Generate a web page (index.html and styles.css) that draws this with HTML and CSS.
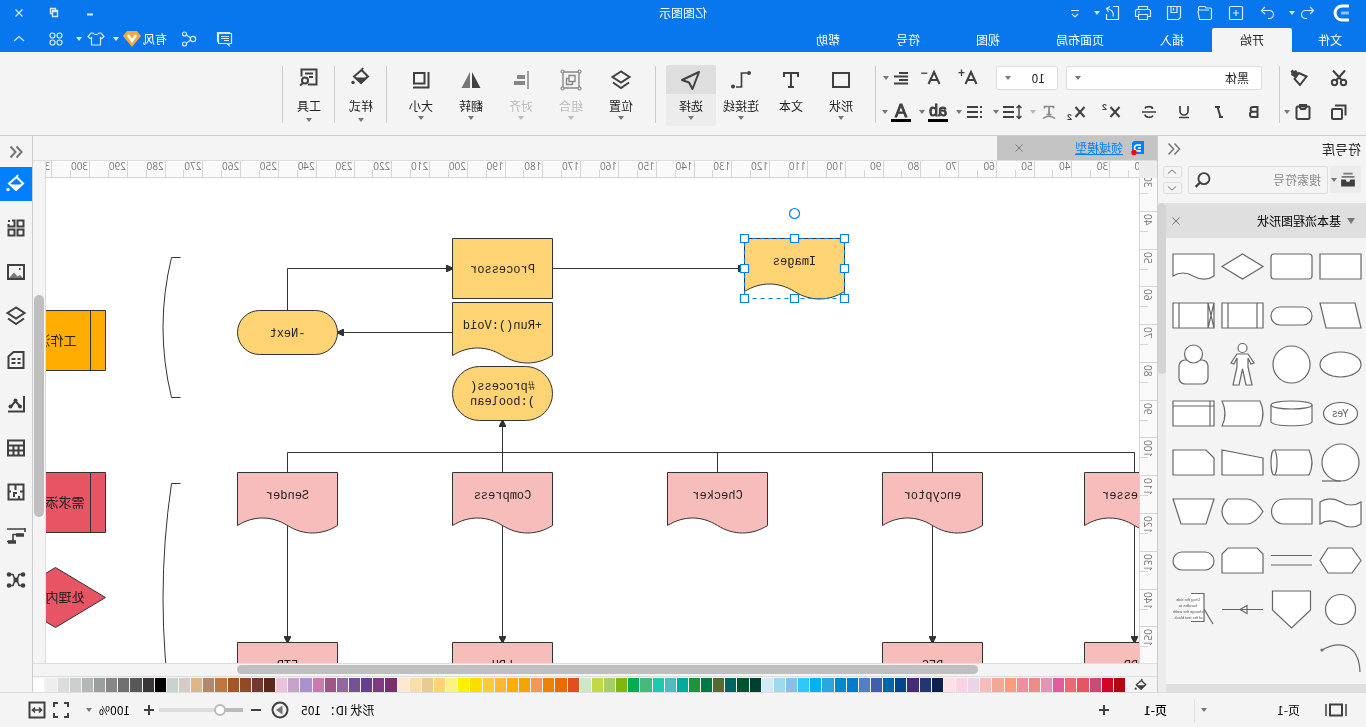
FILE: index.html
```html
<!DOCTYPE html>
<html lang="zh-CN">
<head>
<meta charset="utf-8">
<title>亿图图示</title>
<link rel="stylesheet" href="styles.css">
</head>
<body>
<svg class="defs" aria-hidden="true">
  <symbol id="undo" viewBox="0 0 24 24"><path d="M10 6 6.500 9.500 10 13M7 9.500h7.500a4 4 0 0 1 0 8H13"/></symbol>
  <symbol id="redo" viewBox="0 0 24 24"><path d="M14 6l3.500 3.500L14 13M17 9.500H9.500a4 4 0 0 0 0 8H11"/></symbol>
  <symbol id="new" viewBox="0 0 24 24"><rect x="5.500" y="5.500" width="13" height="13" rx="1"/><path d="M12 9v6M9 12h6"/></symbol>
  <symbol id="open" viewBox="0 0 24 24"><path d="M18.500 9V6.500l-1-1H12L11 7H6.500l-1 1v9.500l1 1h11l1.500-8-1-1.500H8"/></symbol>
  <symbol id="save" viewBox="0 0 24 24"><path d="M5.500 5.500h13v13h-11l-2-2zM9 5.500v6h6v-6M12.500 7v2.500"/></symbol>
  <symbol id="print" viewBox="0 0 24 24"><path d="M7.500 9V5.500h9V9M7.500 15.500h-3v-6l1-1h13l1 1v6h-3M7.500 13.500h9v5h-9zM15 11h2"/></symbol>
  <symbol id="export" viewBox="0 0 24 24"><path d="M11 5.500H5.500v13h12V13M11 15.500c-1-4 1-7 6-8M14 5.500l3.500 2-2 3.500"/></symbol>
  <symbol id="drop" viewBox="0 0 24 24"><path d="M8 9.500h8M9 13l3 3 3-3"/></symbol>
  <symbol id="comment" viewBox="0 0 24 24"><path d="M5.500 6.500h13v10H10l-2 2v-2H5.500zM8 9.500h8M8 11.500h8M8 13.500h5M7 5.500h12.500V15"/></symbol>
  <symbol id="share" viewBox="0 0 24 24"><circle cx="8" cy="12" r="2.700"/><circle cx="16.500" cy="7" r="2"/><circle cx="16.500" cy="17" r="2"/><path d="M10.500 11 14.500 8M10.500 13l4 3"/></symbol>
  <symbol id="shirt" viewBox="0 0 24 24"><path d="M9 6c1 2 5 2 6 0h2l3 3.500-2 2-1.500-1V18h-9v-7.500L6 11.500l-2-2L7 6z"/></symbol>
  <symbol id="apps" viewBox="0 0 24 24"><circle cx="8.500" cy="8.500" r="2.500"/><circle cx="15.500" cy="8.500" r="2.500"/><circle cx="8.500" cy="15.500" r="2.500"/><circle cx="15.500" cy="15.500" r="2.500"/></symbol>
  <symbol id="up" viewBox="0 0 24 24"><path d="M7 14l5-4.500 5 4.500"/></symbol>
  <symbol id="down" viewBox="0 0 24 24"><path d="M7 10l5 4.500 5-4.500"/></symbol>
  <symbol id="min" viewBox="0 0 24 24"><path d="M9 13.500h6" stroke-width="2"/></symbol>
  <symbol id="restore" viewBox="0 0 24 24"><path d="M8.500 10.500h5v5h-5zM8.500 10.500v-1h5v1M10.500 9V7.500h5v5h-2" stroke-width="1.400"/></symbol>
  <symbol id="x" viewBox="0 0 24 24"><path d="M8.500 8.500l7 7M15.500 8.500l-7 7"/></symbol>
  <symbol id="fold" viewBox="0 0 24 24"><path d="M11.500 6.500 6.500 12l5 5.500M17.500 6.500l-5 5.500 5 5.500"/></symbol>

  <symbol id="cut" viewBox="0 0 24 24"><circle cx="7.500" cy="16.500" r="2.700"/><circle cx="16.500" cy="16.500" r="2.700"/><path d="M6 4.500l9 10M18 4.500l-9 10"/></symbol>
  <symbol id="brush" viewBox="0 0 24 24"><path d="M4.500 10.500 12 7l4.500 6-5.500 6z"/><path d="M12 8l3-4 2 1 1.500-1.500 2 2-1 1.500.5 2-4 2.500z" fill="currentColor" stroke="none"/></symbol>
  <symbol id="copy" viewBox="0 0 24 24"><rect x="9" y="9" width="10" height="10" rx="1"/><path d="M5.500 15.500v-10H16"/></symbol>
  <symbol id="paste" viewBox="0 0 24 24"><rect x="5.500" y="6.500" width="13" height="12.500" rx="1.500"/><path d="M9 6.500V5h6v2.500l-1 1.500h-4l-1-1.500z"/></symbol>
  <symbol id="bold" viewBox="0 0 24 24"><path d="M8.500 7h4.500a2.400 2.400 0 0 1 0 4.800H8.500zM8.500 11.800h5a2.600 2.600 0 0 1 0 5.200h-5z"/></symbol>
  <symbol id="italic" viewBox="0 0 24 24"><path d="M11 7h5M8 17h4M13.500 7l-3 10"/></symbol>
  <symbol id="under" viewBox="0 0 24 24"><path d="M8 6v5a4 4 0 0 0 8 0V6M7 17.500h10" stroke-width="1.700"/></symbol>
  <symbol id="strike" viewBox="0 0 24 24"><path d="M16 8.500C15 6 8.500 6 8.500 9M8 15.500c1 2.500 8 2.500 8-1M5 12h14" stroke-width="1.700"/></symbol>
  <symbol id="cross" viewBox="0 0 24 24"><path d="M6.500 7l9 10M15.500 7l-9 10" stroke-width="2"/></symbol>
  <symbol id="clear" viewBox="0 0 24 24"><path d="M7.500 8.500V6.500h9v2M12 6.500v8M9.500 14.500h5M6 18.500c3-3 9-3 12 0" stroke-width="1.700"/></symbol>
  <symbol id="spacing" viewBox="0 0 24 24"><path d="M10 7h11M10 12h11M10 17h11" stroke-width="2"/><path d="M5 6v12M2.500 8 5 5.500 7.500 8M2.500 16 5 18.500 7.500 16" stroke-width="1.400"/></symbol>
  <symbol id="bullets" viewBox="0 0 24 24"><path d="M9 7h11M9 12h11M9 17h11M5 7h2M5 12h2M5 17h2" stroke-width="2"/></symbol>
  <symbol id="align" viewBox="0 0 24 24"><path d="M5 7h9M5 10.500h14M5 14h9M5 17.500h14" stroke-width="2"/></symbol>
  <symbol id="letter" viewBox="0 0 24 24"><path d="M5.500 18 11 6l5.500 12M7.500 14h7" stroke-width="2"/></symbol>

  <symbol id="r-shape" viewBox="0 0 24 24"><rect x="4" y="5" width="16" height="14" stroke-width="2"/></symbol>
  <symbol id="r-text" viewBox="0 0 24 24"><path d="M5 9V5h14v4M12 5v14M9 19h6" stroke-width="2"/></symbol>
  <symbol id="r-line" viewBox="0 0 24 24"><path d="M6 5h5.500v14H17" stroke-width="1.700"/><circle cx="4" cy="5" r="2" fill="currentColor" stroke="none"/><circle cx="20" cy="18.500" r="2" fill="currentColor" stroke="none"/></symbol>
  <symbol id="r-select" viewBox="0 0 24 24"><path d="M4 4l17 8-7 2.500-3.500 6.500z" stroke-width="2" stroke-linejoin="round"/></symbol>
  <symbol id="layers" viewBox="0 0 24 24"><path d="M12 3.500 20.500 9 12 14.500 3.500 9z"/><path d="M4 14.500 12 20l8-5.500"/></symbol>
  <symbol id="r-group" viewBox="0 0 24 24"><path d="M4 4h16v16H4zM8 7.500h6v6H8zM14 10.500h2.500v6h-6v-3" stroke-width="1.400"/><g fill="#f4f4f4" stroke-width="1.200"><circle cx="3.500" cy="3.500" r="1.500"/><circle cx="20.500" cy="3.500" r="1.500"/><circle cx="3.500" cy="20.500" r="1.500"/><circle cx="20.500" cy="20.500" r="1.500"/></g></symbol>
  <symbol id="r-align" viewBox="0 0 24 24"><path d="M5 3v18" stroke-width="1.500"/><path d="M8 9h8M8 15h11" stroke-width="4"/></symbol>
  <symbol id="r-flip" viewBox="0 0 24 24"><path d="M11 4v16H2.500z" fill="currentColor" stroke="none"/><path d="M13 4v16h8.500z" fill="#777" stroke="none"/></symbol>
  <symbol id="r-size" viewBox="0 0 24 24"><rect x="8.500" y="5" width="10.500" height="10.500" stroke-width="2"/><path d="M4.500 4v15.500H20" stroke-width="2"/></symbol>
  <symbol id="bucket" viewBox="0 0 24 24"><path d="M11.500 5 5 11.500l7 6.500 7-6.500L12 5.500 10 3"/><path d="M5 12.500h14L12 19z" fill="currentColor" stroke="none"/><circle cx="20" cy="17.500" r="1.700" fill="currentColor" stroke="none"/></symbol>
  <symbol id="r-tools" viewBox="0 0 24 24"><path d="M13 19.500H4.500v-15h15v7M8 8.500h8M8 12h4"/><circle cx="16" cy="15.500" r="3"/><path d="M18 18l3 2.500"/></symbol>

  <symbol id="s-grid" viewBox="0 0 24 24"><path d="M4.500 4.500h6v6h-6zM4.500 13.500h6v6h-6zM13.500 13.500h6v6h-6zM16 4.500h-2.500v6h6V8"/><path d="M18 5h2" stroke-width="2"/></symbol>
  <symbol id="s-image" viewBox="0 0 24 24"><rect x="4" y="5" width="16" height="14"/><path d="M5 18l3-3 2.500 1.500 3.500-4 5 5.500z" fill="#777" stroke="none"/><path d="M7.500 9h1.500"/></symbol>
  <symbol id="s-doc" viewBox="0 0 24 24"><path d="M4.500 4h10l5 4.500V20h-15zM7.500 11h3M12.500 11h4M7.500 15h3M12.500 15h4"/></symbol>
  <symbol id="s-chart" viewBox="0 0 24 24"><path d="M4 4v15.500h16M8 14.500 12.500 9l4.500 5.500"/><g fill="currentColor" stroke="none"><circle cx="8" cy="14.500" r="2"/><circle cx="12.500" cy="8.500" r="2"/><circle cx="17.500" cy="14.500" r="2"/></g></symbol>
  <symbol id="s-table" viewBox="0 0 24 24"><rect x="4" y="4.500" width="16" height="15"/><path d="M4 9.500h16M4 14.500h16M9.500 9.500v10M14.500 9.500v10"/></symbol>
  <symbol id="s-plan" viewBox="0 0 24 24"><path d="M4.500 4.500h15v15h-15zM12.500 4.500V10M4.500 11.500h3.500M11 13h3v4M17 11.500h2.500M9 19.500V16" stroke-width="2"/></symbol>
  <symbol id="s-gantt" viewBox="0 0 24 24"><path d="M3 5h18M3 4v4M6 10.500h9M15 17.500V10M12 17.500h9" stroke-width="1.600"/><path d="M4 11h8M12 18h8" stroke-width="3.500"/></symbol>
  <symbol id="s-mind" viewBox="0 0 24 24"><path d="M5 6.500h4l2 5.500h2l2-5.500h4M5 17.500h4L11 12h2l2 5.500h4" stroke-width="1.600"/><g fill="currentColor" stroke="none"><circle cx="5" cy="6.500" r="2.300"/><circle cx="19" cy="6.500" r="2.300"/><circle cx="5" cy="17.500" r="2.300"/><circle cx="19" cy="17.500" r="2.300"/><circle cx="12" cy="12" r="2.500"/></g></symbol>

  <symbol id="library" viewBox="0 0 24 24"><path d="M7 5h10M5 8.500h14" stroke="#777"/><path d="M4.500 11.500h5l1 2.500h3l1-2.500h5V19h-15z" fill="currentColor" stroke="none"/></symbol>
  <symbol id="search" viewBox="0 0 24 24"><circle cx="11" cy="10.500" r="6"/><path d="M15.500 15l4.500 4.500" stroke-width="2.600"/></symbol>
  <symbol id="screen" viewBox="0 0 24 24"><rect x="6" y="6.500" width="12" height="11"/><path d="M2 6v12M22 6v12" stroke-width="1.500"/></symbol>
  <symbol id="plus" viewBox="0 0 24 24"><path d="M12 7v10M7 12h10"/></symbol>
  <symbol id="minus" viewBox="0 0 24 24"><path d="M7 12h10"/></symbol>
  <symbol id="play" viewBox="0 0 24 24"><circle cx="12" cy="12" r="7.500"/><path d="M9.500 7.500l6.500 4.500-6.500 4.500z" fill="#777" stroke="none"/></symbol>
  <symbol id="full" viewBox="0 0 24 24"><path d="M5 9V5h4M15 5h4v4M19 15v4h-4M9 19H5v-4"/></symbol>
  <symbol id="fit" viewBox="0 0 24 24"><rect x="4.500" y="4.500" width="15" height="15"/><path d="M7 12h10M10 9.500 7.500 12l2.500 2.500M14 9.500l2.500 2.500-2.500 2.500" stroke-width="1.600"/></symbol>
</svg>

<div class="app">
  <header class="top">
    <div class="titlebar">
      <div class="quick">
        <svg class="logo" viewBox="0 0 18 18"><path d="M1 2h7a7 7 0 0 1 0 14H1" stroke="#fff" stroke-width="3" fill="none"/><path d="M1 9h8" stroke="#8cc4ff" stroke-width="3"/></svg>
        <button class="ico ico--first" aria-label="撤销"><svg><use href="#undo"/></svg></button><i class="caret"></i>
        <button class="ico tb" aria-label="重做"><svg><use href="#redo"/></svg></button>
        <button class="ico tb" aria-label="新建"><svg><use href="#new"/></svg></button>
        <button class="ico tb" aria-label="打开"><svg><use href="#open"/></svg></button>
        <button class="ico tb" aria-label="保存"><svg><use href="#save"/></svg></button>
        <button class="ico tb" aria-label="打印"><svg><use href="#print"/></svg></button>
        <button class="ico" aria-label="导出"><svg><use href="#export"/></svg></button><i class="caret"></i>
        <button class="ico more" aria-label="更多"><svg><use href="#drop"/></svg></button>
      </div>
      <h1 class="title">亿图图示</h1>
      <div class="window">
        <button class="ico" aria-label="最小化"><svg><use href="#min"/></svg></button>
        <button class="ico" aria-label="还原"><svg><use href="#restore"/></svg></button>
        <button class="ico" aria-label="关闭"><svg><use href="#x"/></svg></button>
      </div>
    </div>
    <div class="menubar">
      <nav class="menu">
        <button>文件</button><button class="on">开始</button><button>插入</button><button>页面布局</button><button>视图</button><button>符号</button><button>帮助</button>
      </nav>
      <div class="account">
        <button class="ico" aria-label="评论"><svg><use href="#comment"/></svg></button>
        <button class="ico" aria-label="分享"><svg><use href="#share"/></svg></button>
        <button class="user">有风<svg class="vip" viewBox="0 0 18 16"><path d="M4 0h10l4 5-9 11L0 5z" fill="#f3ab3c"/><path d="M5 4l4 6 4-6" fill="none" stroke="#fff" stroke-width="2.400"/></svg><i class="caret"></i></button>
        <button class="ico skin" aria-label="皮肤"><svg><use href="#shirt"/></svg></button><i class="caret"></i>
        <button class="ico appsbtn" aria-label="应用"><svg><use href="#apps"/></svg></button>
        <button class="ico" aria-label="收起"><svg><use href="#up"/></svg></button>
      </div>
    </div>
  </header>

  <section class="ribbon">
    <div class="clip">
      <div class="row"><button class="ico" aria-label="剪切"><svg><use href="#cut"/></svg></button><button class="ico brush" aria-label="格式刷"><svg><use href="#brush"/></svg></button></div>
      <div class="row"><button class="ico" aria-label="复制"><svg><use href="#copy"/></svg></button><button class="ico paste" aria-label="粘贴"><svg><use href="#paste"/></svg></button><i class="caret"></i></div>
    </div>
    <div class="font">
      <div class="row">
        <label class="field field--font"><select aria-label="字体"><option>黑体</option></select><i class="caret"></i></label>
        <label class="field field--size"><select aria-label="字号"><option>10</option></select><i class="caret"></i></label>
        <button class="ico grow" aria-label="增大字号"><svg><use href="#letter"/></svg><sup>+</sup></button>
        <button class="ico shrink" aria-label="减小字号"><svg><use href="#letter"/></svg><sup>−</sup></button>
        <button class="ico" aria-label="对齐"><svg><use href="#align"/></svg></button><i class="caret"></i>
      </div>
      <div class="row row--format">
        <button class="ico tf" aria-label="粗体"><svg><use href="#bold"/></svg></button>
        <button class="ico tf" aria-label="斜体"><svg><use href="#italic"/></svg></button>
        <button class="ico tf" aria-label="下划线"><svg><use href="#under"/></svg></button>
        <button class="ico tf" aria-label="删除线"><svg><use href="#strike"/></svg></button>
        <button class="ico tf" aria-label="上标"><svg><use href="#cross"/></svg><sup>2</sup></button>
        <button class="ico tf" aria-label="下标"><svg><use href="#cross"/></svg><sub>2</sub></button>
        <span class="split split--off"><button class="ico" aria-label="清除格式"><svg><use href="#clear"/></svg></button><i class="caret"></i></span>
        <span class="split"><button class="ico" aria-label="行距"><svg><use href="#spacing"/></svg></button><i class="caret"></i></span>
        <span class="split"><button class="ico" aria-label="项目符号"><svg><use href="#bullets"/></svg></button><i class="caret"></i></span>
        <span class="split"><button class="mark" aria-label="突出显示">ab</button><i class="caret"></i></span>
        <span class="split"><button class="mark mark--a" aria-label="字体颜色">A</button><i class="caret"></i></span>
      </div>
    </div>
    <div class="big">
      <button><svg><use href="#r-shape"/></svg><span>形状</span><i class="caret"></i></button>
      <button><svg><use href="#r-text"/></svg><span>文本</span><i class="caret none"></i></button>
      <button><svg><use href="#r-line"/></svg><span>连接线</span><i class="caret"></i></button>
      <button class="on"><svg><use href="#r-select"/></svg><span>选择</span><i class="caret"></i></button>
    </div>
    <div class="big">
      <button><svg><use href="#layers"/></svg><span>位置</span><i class="caret"></i></button>
      <button class="off"><svg><use href="#r-group"/></svg><span>组合</span><i class="caret"></i></button>
      <button class="off"><svg><use href="#r-align"/></svg><span>对齐</span><i class="caret"></i></button>
      <button><svg><use href="#r-flip"/></svg><span>翻转</span><i class="caret"></i></button>
      <button><svg><use href="#r-size"/></svg><span>大小</span><i class="caret"></i></button>
    </div>
    <div class="big big--one"><button><svg><use href="#bucket"/></svg><span>样式</span><i class="caret"></i></button></div>
    <div class="big big--one"><button><svg><use href="#r-tools"/></svg><span>工具</span><i class="caret"></i></button></div>
  </section>

  <main class="work">
    <aside class="library">
      <div class="lib-head"><h2>符号库</h2><button class="ico" aria-label="折叠"><svg><use href="#fold"/></svg></button></div>
      <div class="lib-tools">
        <button class="lib-btn" aria-label="符号库菜单"><svg><use href="#library"/></svg><i class="caret"></i></button>
        <label class="search"><input type="text" placeholder="搜索符号" aria-label="搜索符号"><svg><use href="#search"/></svg></label>
        <div class="step"><button aria-label="上一个"><svg><use href="#up"/></svg></button><button aria-label="下一个"><svg><use href="#down"/></svg></button></div>
      </div>
      <div class="lib-body">
        <div class="lib-list">
          <div class="cat"><i class="tri"></i><h3>基本流程图形状</h3><button class="ico" aria-label="关闭"><svg><use href="#x"/></svg></button></div>
          <div class="shapes">
            <svg><path d="M4 12h41v25H4z"/></svg>
            <svg><rect x="4" y="12" width="41" height="25" rx="3"/></svg>
            <svg><path d="M4 24.500 24.500 12 45 24.500 24.500 37z"/></svg>
            <svg><path d="M4 12h41v22c-6-4-14-4-20 0-7 4-15 4-21 0z"/></svg>
            <svg><path d="M10 12h35l-6 25H4z"/></svg>
            <svg><rect x="4" y="16" width="41" height="18" rx="9"/></svg>
            <svg><path d="M4 12h41v25H4zM10 12v25M39 12v25"/></svg>
            <svg><path d="M4 12h41v25H4zM10 12v25M39 12v25M4 12l6 25M10 12 4 37"/></svg>
            <svg><ellipse cx="24.500" cy="24.500" rx="20.500" ry="12.500"/></svg>
            <svg><circle cx="24.500" cy="24.500" r="18.500"/></svg>
            <svg><circle cx="24.500" cy="8" r="4.500"/><path d="M19 14h11l6 9-3 1-3-6v9l4 18h-6l-3.500-16L21 45h-6l4-18v-9l-3 6-3-1z"/></svg>
            <svg><rect x="10" y="20" width="29" height="24" rx="6"/><circle cx="24.500" cy="14" r="9"/></svg>
            <svg><ellipse cx="24.500" cy="24.500" rx="17" ry="11"/><text x="24.500" y="28" class="yes">Yes</text></svg>
            <svg><path d="M4 16v17c4 5 37 5 41 0V16"/><ellipse cx="24.500" cy="16" rx="20.500" ry="4"/></svg>
            <svg><path d="M7 12h38q-6 12.500 0 25H7q-6-12.500 0-25z"/></svg>
            <svg><path d="M4 12h41v25H4zM8 12v25M4 17h41"/></svg>
            <svg><circle cx="24.500" cy="24.500" r="18.500"/><path d="M24.500 43H43"/></svg>
            <svg><path d="M42 12H7q-6 12.500 0 25h35"/><ellipse cx="42" cy="24.500" rx="3" ry="12.500"/></svg>
            <svg><path d="M4 20 45 12v25H4z"/></svg>
            <svg><path d="M12 12h33v25H4V20z"/></svg>
            <svg><path d="M4 15c6 4 14 4 20 0 7-4 15-4 21 0v22c-6-4-14-4-21 0-6 4-14 4-20 0z"/></svg>
            <svg><path d="M4 12h28a12.500 12.500 0 0 1 0 25H4z"/></svg>
            <svg><path d="M4 24.500Q12 12 20 12h19q12 12.500 0 25H20Q12 37 4 24.500z"/></svg>
            <svg><path d="M4 12h41l-8 25H12z"/></svg>
            <svg><path d="M4 24.500 13 12h24l8 12.500L37 37H13z"/></svg>
            <svg><path d="M4 19.500h41M4 29h41"/></svg>
            <svg><path d="M10 12h29l6 6v19H4V18z"/></svg>
            <svg><rect x="4" y="16" width="41" height="18" rx="9"/></svg>
            <svg><circle cx="24.500" cy="24.500" r="15"/></svg>
            <svg><path d="M5.500 6h38v19l-19 18-19-18z"/></svg>
            <svg><path d="M4 24.500h41M20 20.500v8l7-4z"/></svg>
            <svg><path d="M27 8.500H14v28h13M14 24 5 39"/><g class="note"><text x="30" y="16">Drag the side</text><text x="30" y="22">handles to</text><text x="30" y="28">change the width</text><text x="30" y="34">of the text block.</text></g></svg>
            <svg><path class="open" d="M5 38C6 10 25 6 43 16"/><circle cx="43" cy="16" r="1"/></svg>
          </div>
        </div>
        <div class="vbar"><i></i></div>
      </div>
    </aside>

    <section class="center">
      <div class="tabs">
        <div class="tab">
          <svg class="tab-ico" viewBox="0 0 14 16"><path d="M1 1h10l2 2v11H1z" fill="#0080ff"/><path d="M4 5h3.500a2.500 2.500 0 0 1 0 6H4M4 8h3" fill="none" stroke="#fff" stroke-width="1.500"/><circle cx="11" cy="12.500" r="2.700" fill="red"/></svg>
          <a href="#doc">领域模型</a>
          <button class="ico" aria-label="关闭标签"><svg><use href="#x"/></svg></button>
        </div>
      </div>
      <div class="stage">
        <div class="corner"></div>
        <div class="ruler ruler--h"></div>
        <div class="gap"></div>
        <div class="ruler ruler--v"></div>
        <svg class="canvas" id="doc">
          <defs>
            <marker id="arrow" viewBox="0 0 8 8" refX="7" refY="4" markerWidth="7" markerHeight="7" markerUnits="userSpaceOnUse" orient="auto"><path d="M0 0 8 4 0 8z" fill="#333"/></marker>
            <path id="docshape" d="M0 0h100v53c-16 10-34 10-50 0-16-10-34-10-50 0z" transform="matrix(-1 0 0 1 100 0)"/>
          </defs>
          <g transform="translate(-226.500 -177.500)">
            <g class="wire">
              <path d="M813 268H621" marker-end="url(#arrow)"/>
              <path d="M1078 310V268H913" marker-end="url(#arrow)"/>
              <path d="M913 332h115" marker-end="url(#arrow)"/>
              <path d="M863 472V420" marker-end="url(#arrow)"/>
              <path d="M231 472V452h847v20M433 452v20M648 452v20"/>
              <path d="M1078 524v118" marker-end="url(#arrow)"/>
              <path d="M863 524v118" marker-end="url(#arrow)"/>
              <path d="M433 524v118" marker-end="url(#arrow)"/>
              <path d="M231 524v118" marker-end="url(#arrow)"/>
              <path d="M1185 257h9q17 70 0 140h-9M1185 483h9q17 115 0 230h-9"/>
            </g>
            <g class="gold">
              <use href="#docshape" x="521" y="238"/>
              <path d="M813 238h100v60H813z"/>
              <use href="#docshape" x="813" y="302"/>
              <rect x="1028" y="310" width="100" height="44" rx="22"/>
              <rect x="813" y="366" width="100" height="54" rx="27"/>
            </g>
            <g class="pink">
              <use href="#docshape" x="181" y="472"/><use href="#docshape" x="383" y="472"/><use href="#docshape" x="598" y="472"/><use href="#docshape" x="813" y="472"/><use href="#docshape" x="1028" y="472"/>
              <path d="M181 642h100v60H181zM383 642h100v60H383zM813 642h100v60H813zM1028 642h100v60h-100z"/>
            </g>
            <path class="amber" d="M1260 310h100v60h-100zM1275 310v60"/>
            <path class="red" d="M1260 472h100v60h-100zM1275 472v60M1260 597l50-30 50 30-50 30z"/>
            <g class="label">
              <text x="571" y="264">Images</text><text x="863" y="272">Processor</text><text x="863" y="328">+Run():Void</text><text x="1078" y="336">-Next</text><text x="863" y="389">#process(</text><text x="863" y="404">):boolean</text>
              <text x="231" y="498">processer</text><text x="433" y="498">encyptor</text><text x="648" y="498">Checker</text><text x="863" y="498">Compress</text><text x="1078" y="498">Sender</text>
              <text x="231" y="668">UDP</text><text x="433" y="668">DES</text><text x="863" y="668">LPH</text><text x="1078" y="668">FTP</text>
            </g>
            <g class="cjk"><text x="1289" y="344">工作流</text><text x="1281" y="506">需求添加</text><text x="1281" y="601">处理内容</text></g>
            <g class="handles">
              <path d="M521 238h100v60H521z" class="dash"/>
              <circle cx="571" cy="213" r="5"/>
              <path d="M517 234h8v8h-8zM567 234h8v8h-8zM617 234h8v8h-8zM517 264h8v8h-8zM617 264h8v8h-8zM517 294h8v8h-8zM567 294h8v8h-8zM617 294h8v8h-8z"/>
            </g>
          </g>
        </svg>
        <div class="scroll-v"><i></i></div>
        <div class="scroll-h"><i></i></div>
      </div>
      <div class="palette"><svg class="fill"><use href="#bucket"/></svg><div class="swatches"></div></div>
    </section>

    <aside class="rail">
      <button class="rail-fold" aria-label="折叠"><svg><use href="#fold"/></svg></button>
      <button class="on" aria-label="填充"><svg><use href="#bucket"/></svg></button>
      <button aria-label="符号"><svg><use href="#s-grid"/></svg></button>
      <button aria-label="图片"><svg><use href="#s-image"/></svg></button>
      <button aria-label="图层"><svg><use href="#layers"/></svg></button>
      <button aria-label="备注"><svg><use href="#s-doc"/></svg></button>
      <button aria-label="图表"><svg><use href="#s-chart"/></svg></button>
      <button aria-label="表格"><svg><use href="#s-table"/></svg></button>
      <button aria-label="平面图"><svg><use href="#s-plan"/></svg></button>
      <button aria-label="甘特图"><svg><use href="#s-gantt"/></svg></button>
      <button aria-label="思维导图"><svg><use href="#s-mind"/></svg></button>
    </aside>
  </main>

  <footer class="status">
    <div class="pages">
      <button class="ico view" aria-label="视图"><svg><use href="#screen"/></svg></button>
      <label class="page-pick"><select aria-label="页面"><option>页-1</option></select><i class="caret"></i></label>
      <button class="page-tab">页-1</button>
      <button class="ico" aria-label="添加页面"><svg><use href="#plus"/></svg></button>
    </div>
    <div class="zoom">
      <span class="shape-id">形状 ID：&nbsp;105</span>
      <button class="ico" aria-label="播放"><svg><use href="#play"/></svg></button>
      <button class="ico" aria-label="缩小"><svg><use href="#minus"/></svg></button>
      <input type="range" min="0" max="100" value="23" aria-label="缩放">
      <button class="ico" aria-label="放大"><svg><use href="#plus"/></svg></button>
      <span class="percent">100%</span><i class="caret"></i>
      <button class="ico full" aria-label="全屏"><svg><use href="#full"/></svg></button>
      <button class="ico fit" aria-label="适合宽度"><svg><use href="#fit"/></svg></button>
    </div>
  </footer>
</div>
<script src="app.js"></script>
</body>
</html>
```

FILE: styles.css
```css
* { box-sizing: border-box; }
html, body { height: 100%; margin: 0; overflow: hidden; }
body { font: 12px/16px "Noto Sans CJK SC", sans-serif; color: #222; background: #f4f4f4; }
h1, h2, h3 { margin: 0; font-size: 12px; font-weight: 400; }
button, input, select { font: inherit; color: inherit; margin: 0; padding: 0; border: 0; background: none; outline: 0; appearance: none; }
button { display: flex; align-items: center; justify-content: center; }
.defs { display: none; }

/* the whole interface is shown as in a mirror */
.app { display: flex; flex-direction: column; height: 100vh; transform: scaleX(-1); }

.ico { position: relative; flex: none; width: 24px; height: 24px; }
svg { flex: none; fill: none; stroke: currentColor; }
.ico svg { width: 24px; height: 24px; }
.caret { flex: none; display: block; width: 0; height: 0; border: 3px solid transparent; border-top: 4px solid #777; border-bottom: 0; }

/* title and menu */
.top { flex: none; background: #0877ee; color: #fff; }
.top .ico svg { stroke: #d8eaff; stroke-width: 1.2; }
.top .caret { border-top-color: #d8eaff; }
.titlebar { display: grid; grid-template-columns: 1fr auto 1fr; align-items: center; height: 26px; }
.quick { display: flex; align-items: center; }
.quick .logo { width: 18px; height: 18px; margin-left: 16px; }
.quick .ico--first { margin-left: 12px; margin-right: 1px; }
.quick .tb { width: 31px; }
.quick .caret + .tb { margin-left: 6px; }
.quick .tb + .ico:not(.tb) { margin-left: 4px; }
.quick .more { margin-left: 7px; }
.window { display: flex; justify-content: flex-end; gap: 11px; padding-right: 7px; }
.window .ico:first-child { margin-right: 1px; }
.menubar { display: flex; justify-content: space-between; height: 26px; }
.menu { display: flex; }
.menu button { padding: 0 28px; height: 24px; margin-top: 2px; border-radius: 2px 2px 0 0; }
.menu button:first-child { padding: 0 26px 0 24px; }
.menu .on { background: #f4f4f4; color: #222; }
.account { display: flex; align-items: center; padding-right: 7px; }
.account .ico + .ico { margin-left: 12px; }
.user { gap: 2px; margin: 0 5px 0 10px; }
.vip { width: 18px; height: 16px; stroke: none; }
.account .caret { margin-left: 2px; }
.account .appsbtn { margin-left: 8px; }
.account .appsbtn + .ico { margin-left: 13px; }

/* ribbon */
.ribbon { flex: none; display: flex; align-items: flex-start; height: 84px; padding-top: 13px; color: #404040; border-bottom: 1px solid #ccc; }
.ribbon svg { stroke-width: 2; }
.ribbon > div { position: relative; height: 57px; border-right: 1px solid #ccc; margin-top: 1px; }
.row { display: flex; align-items: center; height: 24px; }
.row + .row { margin-top: 10px; }
.clip { width: 87px; padding-left: 15px; }
.brush { margin-left: 16px; }
.paste { margin: 0 1px 0 12px; }
.font { width: 404px; padding-left: 17px; }
.field { position: relative; display: flex; align-items: center; height: 24px; background: #fff; border: 1px solid #ddd; border-radius: 2px; color: #222; }
.field select { width: 100%; height: 100%; padding: 0 12px; }
.field .caret, .page-pick .caret { margin-right: 8px; }
.field--font { width: 196px; margin-right: 8px; }
.field--size { width: 62px; margin-right: 14px; }
.grow { margin-right: 13px; }
.shrink { margin-right: 8px; }
.ico sup, .ico sub { position: absolute; right: 0; font: 700 9px/10px "Liberation Sans", sans-serif; }
.ico sup { top: 2px; }
.ico sub { bottom: 2px; }
.grow sup, .shrink sup { font-size: 12px; right: 0; }
.row--format { margin-left: -4px; }
.tf { margin-right: 11px; }
.split { flex: none; display: flex; align-items: center; width: 37px; }
.split .ico { width: 20px; }
.split .caret { margin-left: 3px; }
.row--format .split:nth-of-type(1) { margin-left: -3px; }
.split--off { color: #888; }
.split--off .caret { border-top-color: #bbb; }
.mark { width: 20px; height: 20px; font: 16px/16px "Liberation Sans", sans-serif; border-bottom: 3px solid #000; -webkit-text-stroke: 1px #404040; }
.mark--a { font-size: 18px; }
.ribbon .big { display: flex; padding: 0 10px 0 9px; }
.ribbon .big + .big { padding-right: 9px; }
.big button { flex-direction: column; width: 50px; height: 61px; margin-top: -1px; justify-content: flex-start; color: #222; border-radius: 2px; }
.big svg { width: 24px; height: 24px; color: #404040; margin: 3px 0 2px; }
.big button span { margin-top: 4px; white-space: nowrap; }
.big .caret { margin-top: 2px; }
.big .none { visibility: hidden; }
.big .on { background: linear-gradient(#dedede 29px, #ececec 29px); }
.big .off { color: #bbb; }
.big .off svg { color: #888; }
.big .off .caret { border-top-color: #bbb; }
.ribbon .big + .big--one { padding: 0 1px 0 0; }
.big--one svg { margin: 0 0 5px; }
.big--one .caret { margin-top: 4px; }

/* symbol library */
.work { flex: 1; display: flex; min-height: 0; }
.library { flex: none; display: flex; flex-direction: column; width: 209px; border-right: 1px solid #ccc; }
.lib-head { display: flex; align-items: center; justify-content: space-between; height: 26px; padding: 0 4px 0 5px; }
.lib-head h2 { font-size: 13px; }
.lib-head svg, .rail-fold svg { stroke: #777; stroke-width: 1.5; }
.lib-tools { display: flex; align-items: flex-start; height: 41px; padding: 4px 5px 0; }
.lib-btn { width: 31px; height: 27px; background: #ececec; color: #404040; }
.lib-btn svg { width: 22px; height: 22px; stroke-width: 2; }
.search { display: flex; align-items: center; flex: 1; min-width: 0; height: 28px; margin: 0 6px 0 2px; border: 1px solid #ddd; border-radius: 2px; color: #404040; }
.search input { width: 100%; min-width: 0; padding-left: 6px; }
.search input::placeholder { color: #888; opacity: 1; }
.search svg { width: 22px; height: 22px; margin-right: 3px; stroke-width: 2; }
.step { display: flex; flex-direction: column; gap: 4px; }
.step button { width: 19px; height: 12px; border: 1px solid #ddd; border-radius: 2px; }
.step svg { width: 20px; height: 20px; stroke: #555; }
.lib-body { flex: 1; display: flex; min-height: 0; }
.lib-list { flex: 1; display: flex; flex-direction: column; border-bottom: 8px solid #dfdfdf; }
.cat { display: flex; align-items: center; height: 35px; background: #dfdfdf; padding: 0 0 0 11px; color: #000; }
.cat h3 { margin: 0 auto 0 6px; }
.cat .ico { margin-right: -2px; }
.cat svg { stroke: #777; }
.tri { border: 4px solid transparent; border-top: 6px solid #777; border-bottom: 0; }
.vbar { width: 8px; background: #ececec; }
.vbar i { display: block; height: 171px; border-radius: 4px; background: #d4d4d4; }
.shapes { display: grid; grid-template-columns: repeat(4, 49px); grid-auto-rows: 49px; margin: 4px 0 0 1px; }
.shapes svg { width: 49px; height: 49px; fill: #fff; stroke: #666; stroke-width: 1.2; }
.shapes .open { fill: none; }
.shapes text { stroke: none; fill: #555; font: 10px "Liberation Sans", sans-serif; }
.shapes .yes { text-anchor: middle; }
.shapes .note text { font-size: 4px; text-anchor: middle; }

/* document */
.center { flex: 1; display: flex; flex-direction: column; min-width: 0; }
.tabs { flex: none; height: 25px; border-bottom: 1px solid #ddd; }
.tab { display: flex; align-items: center; width: 160px; height: 24px; padding: 0 10px 0 12px; background: #c4c4c4; }
.tab a { color: #0080ff; margin: 0 auto 0 8px; }
.tab-ico { width: 14px; height: 16px; stroke: none; }
.tab .ico svg { stroke: #777; }
.stage { flex: 1; display: grid; grid-template: 17px minmax(0, 1fr) 14px / 18px minmax(0, 1fr) 13px; min-height: 0; }
.corner { background: #ececec; }
.ruler { display: flex; overflow: hidden; background: #fafafa; color: #777; font: 10px/10px "Open Sans", "Noto Sans", sans-serif; }
.ruler span { flex: none; }
.ruler--h { border-bottom: 1px solid #d4d4d4; }
.ruler--h span { width: 10mm; height: 17px; padding: 0 0 0 1px; border-left: 1px solid #d4d4d4; background: linear-gradient(#d4d4d4, #d4d4d4) 18px 9px / 1px 8px no-repeat; }
.ruler--h span:first-child { margin-left: -9px; }
.ruler--v { flex-direction: column; border-right: 1px solid #d4d4d4; }
.ruler--v span { height: 10mm; display: flex; align-items: flex-end; padding: 2px 0 0 4px; writing-mode: vertical-rl; border-top: 1px solid #d4d4d4; background: linear-gradient(#d4d4d4, #d4d4d4) right 19px / 8px 1px no-repeat; }
.ruler--v span:first-child { margin-top: -5px; }
.ruler--v b { font-weight: 400; width: 10px; transform: rotate(180deg); }
.gap { border-left: 1px solid #ddd; }
.canvas { width: 100%; height: 100%; background: #fff; overflow: hidden; }
.wire, .gold, .pink, .amber, .red { stroke: #333; stroke-width: 1; }
.gold { fill: #fdd373; }
.pink { fill: #f6bdbb; }
.amber { fill: #ffae00; }
.red { fill: #e75463; }
.label text { fill: #222; stroke: none; font: 12px "Liberation Mono", monospace; text-anchor: middle; }
.cjk text { fill: #222; stroke: none; font: 13px "Noto Sans CJK SC", sans-serif; }
.handles { fill: #fff; stroke: #0080ff; stroke-width: 1.2; }
.handles .dash { fill: none; stroke-dasharray: 4 4; }
.scroll-v { display: flex; justify-content: center; border-left: 1px solid #ddd; padding-top: 117px; }
.scroll-v i { width: 10px; height: 222px; border-radius: 5px; background: #bfbfbf; }
.scroll-h { grid-column: 1 / -1; border-top: 1px solid #ddd; border-bottom: 1px solid #ddd; padding: 1px 0 0 179px; }
.scroll-h i { display: block; width: 741px; height: 9px; border-radius: 5px; background: #bfbfbf; }
.palette { flex: none; display: flex; align-items: center; height: 15px; padding: 0 1px 0 6px; }
.palette .fill { width: 20px; height: 16px; margin-right: 6px; color: #404040; stroke-width: 2; }
.swatches { flex: 1; display: flex; gap: 1px; height: 14px; }
.swatches i { flex: 1; }

/* right rail */
.rail { flex: none; width: 33px; border-left: 1px solid #ccc; color: #404040; }
.rail button { width: 32px; height: 34px; margin-bottom: 10px; }
.rail svg { width: 24px; height: 24px; stroke-width: 2; }
.rail .rail-fold { height: 31px; margin: 0; }
.rail .on { background: #0080ff; color: #fff; }

/* status bar */
.status { flex: none; display: flex; justify-content: space-between; align-items: center; height: 35px; border-top: 1px solid #ddd; color: #000; }
.status .ico { color: #404040; }
.status svg { stroke-width: 2; }
.pages, .zoom { display: flex; align-items: center; }
.view { margin-left: 18px; }
.page-pick { display: flex; align-items: center; width: 130px; height: 23px; padding-right: 2px; border-right: 1px solid #ddd; }
.page-pick select { flex: 1; padding-left: 24px; height: 23px; }
.page-pick .caret, .page-pick + button { margin-right: 4px; }
.page-tab { font-weight: 500; padding: 0 24px 0 27px; }
.shape-id { margin-right: 9px; }
.zoom input { width: 84px; height: 14px; margin: 0 0 0 1px; background: linear-gradient(90deg, #bbb 23px, #ddd 23px) center / 100% 4px no-repeat; border-radius: 2px; }
.zoom input::-webkit-slider-thumb { appearance: none; width: 12px; height: 12px; border: 2px solid #bbb; border-radius: 50%; background: #fff; }
.zoom input + .ico { margin: 0 7px 0 -2px; }
.percent { margin-right: 7px; }
.full { margin-left: 13px; }
.fit { margin-right: 25px; }
```

FILE: app.js
```js
const fillRuler = (selector, from, to, make) => {
  const ruler = document.querySelector(selector);
  for (let v = from; v <= to; v += 10) {
    const cell = document.createElement('span');
    cell.innerHTML = make(v);
    ruler.append(cell);
  }
};
fillRuler('.ruler--h', 20, 310, v => v);
fillRuler('.ruler--v', 30, 150, v => `<b>${v}</b>`);

const colours = (
  'b40512 d40520 c74d75 e75463 eb6a70 e45c9c e196b5 ed8c86 f08f9c fe9c78 f1a995 f6bdbb ead5e8 fdd2e3 fde0e5 ' +
  '0d204e 22366f 432d7b 03468d 0068a8 3e60ad 5081c4 007cce 008acb 2aa7e0 00b2f0 2ec7f9 89c0ea a0d8ef d0ebf7 ' +
  '004033 00552f 006460 556a2e 007946 1e9338 00ac9c 50bcc1 1ccab0 46b97b 00ae52 7eb80e a6d067 c0d945 cee7c7 ' +
  'e24e1e ec6a00 ef8200 f39855 f2a300 fdae00 fdb833 facc33 fddc00 fff000 fcf284 fdd373 e9ca93 fddcab fde9d0 ' +
  '7a2f70 803b80 663f93 735297 96669e 9c5687 cc7bb0 a990cf c6a3c8 ebc2dc ' +
  '5a271b 733931 8f4a28 a85525 bd773f b3866d ddb787 d4ccc9 c9d3cd 000000 ' +
  '3b3636 585858 707070 868686 9c9fa0 b3b7b6 cbcfce dcdcdc eeeeee ffffff'
).split(' ');
const swatches = document.querySelector('.swatches');
for (const c of colours) {
  const sw = document.createElement('i');
  sw.style.background = '#' + c;
  swatches.append(sw);
}
```
